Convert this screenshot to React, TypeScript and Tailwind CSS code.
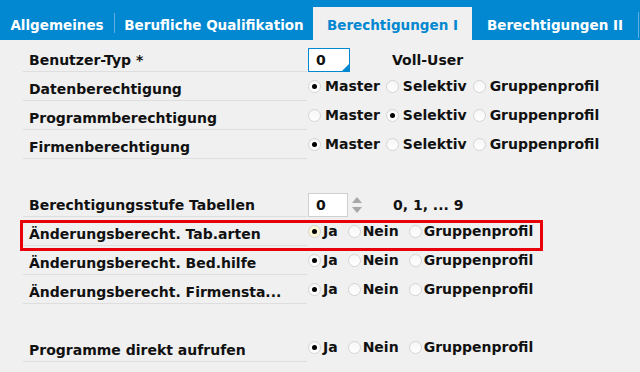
import React from 'react';

type Opt = { label: string; checked?: boolean };

const Radio: React.FC<{ checked?: boolean; focus?: boolean }> = ({ checked, focus }) => (
  <span
    className={`w-[13px] h-[13px] rounded-full border border-[#d4d4d4] flex items-center justify-center shrink-0 ${
      focus ? 'bg-[#fbf8d6]' : 'bg-gradient-to-b from-[#f6f6f6] to-white'
    }`}
  >
    {checked && <span className="w-[5px] h-[5px] rounded-full bg-black" />}
  </span>
);

const RadioGroup: React.FC<{ options: Opt[]; focus?: boolean; wide?: boolean }> = ({ options, focus, wide }) => (
  <div className="flex items-center pt-[5px] leading-[18px]">
    {options.map((o, i) => (
      <div key={o.label} className={`flex items-center ${wide ? 'gap-[4px] mr-[6px]' : 'gap-[2px] mr-[10px]'}`}>
        <Radio checked={o.checked} focus={focus && i === 0} />
        <span>{o.label}</span>
      </div>
    ))}
  </div>
);

const Row: React.FC<{ label: string; children?: React.ReactNode; highlight?: boolean }> = ({
  label,
  children,
  highlight,
}) => (
  <div className="relative flex h-[29px]">
    <div className="w-[284px] border-b border-[#dedede] pl-[6px] pt-[8px] leading-[18px] whitespace-nowrap">
      {label}
    </div>
    <div className="ml-[1px] flex-1">{children}</div>
    {highlight && (
      <div className="absolute -left-[3px] top-[3px] w-[523px] h-[31px] border-[3px] border-[#e8000b] pointer-events-none" />
    )}
  </div>
);

const mso = (sel: number): Opt[] =>
  ['Master', 'Selektiv', 'Gruppenprofil'].map((l, i) => ({ label: l, checked: i === sel }));
const jng = (sel: number): Opt[] =>
  ['Ja', 'Nein', 'Gruppenprofil'].map((l, i) => ({ label: l, checked: i === sel }));

const Tab: React.FC<{ label: string; w: string; active?: boolean }> = ({ label, w, active }) => (
  <div
    className={`${w} h-[33px] flex items-center justify-center pt-[4px] ${
      active ? 'bg-[#f0f0f0] text-[#0288d1]' : 'text-white'
    }`}
  >
    {label}
  </div>
);

export default function App() {
  return (
    <div className="w-[640px] h-[372px] bg-[#f0f0f0] overflow-hidden font-['DejaVu_Sans',sans-serif] font-bold text-[14px] text-[#111]">
      {/* Tabs */}
      <div className="h-[40px] bg-[#0288d1] flex items-end text-[13.5px]">
        <Tab label="Allgemeines" w="w-[114px]" />
        <div className="w-[1px] h-[20px] bg-[#5fb0e0] self-center mt-[6px]" />
        <Tab label="Berufliche Qualifikation" w="w-[198px]" />
        <Tab label="Berechtigungen I" w="w-[159px]" active />
        <Tab label="Berechtigungen II" w="w-[166px]" />
        <div className="w-[1px] h-[26px] bg-[#5fb0e0] self-end mb-[2px]" />
      </div>

      {/* Content */}
      <div className="pt-[3px] pl-[23px]">
        <Row label="Benutzer-Typ *">
          <div className="flex items-center pt-[5px]">
            <div className="relative w-[42px] h-[24px] border border-[#0288d1] bg-white pl-[7px] leading-[22px]">
              0
              <span className="absolute right-0 bottom-0 w-0 h-0 border-l-[7px] border-l-transparent border-b-[7px] border-b-[#0288d1]" />
            </div>
            <span className="ml-[42px]">Voll-User</span>
          </div>
        </Row>
        <Row label="Datenberechtigung">
          <RadioGroup options={mso(0)} wide />
        </Row>
        <Row label="Programmberechtigung">
          <RadioGroup options={mso(1)} wide />
        </Row>
        <Row label="Firmenberechtigung">
          <RadioGroup options={mso(0)} wide />
        </Row>
        <div className="h-[29px]" />
        <Row label="Berechtigungsstufe Tabellen">
          <div className="flex items-center pt-[5px]">
            <div className="w-[40px] h-[24px] border border-[#cfcfcf] bg-white pl-[7px] leading-[22px]">0</div>
            <div className="ml-[3px] flex flex-col items-center gap-[4px] w-[12px]">
              <span className="w-0 h-0 border-l-[5px] border-r-[5px] border-b-[6px] border-l-transparent border-r-transparent border-b-[#a8a8a8]" />
              <span className="w-0 h-0 border-l-[5px] border-r-[5px] border-t-[6px] border-l-transparent border-r-transparent border-t-[#a8a8a8]" />
            </div>
            <span className="ml-[30px]">0, 1, ... 9</span>
          </div>
        </Row>
        <Row label="Änderungsberecht. Tab.arten" highlight>
          <RadioGroup options={jng(0)} focus />
        </Row>
        <Row label="Änderungsberecht. Bed.hilfe">
          <RadioGroup options={jng(0)} />
        </Row>
        <Row label="Änderungsberecht. Firmensta...">
          <RadioGroup options={jng(0)} />
        </Row>
        <div className="h-[29px]" />
        <Row label="Programme direkt aufrufen">
          <RadioGroup options={jng(0)} />
        </Row>
      </div>
    </div>
  );
}
